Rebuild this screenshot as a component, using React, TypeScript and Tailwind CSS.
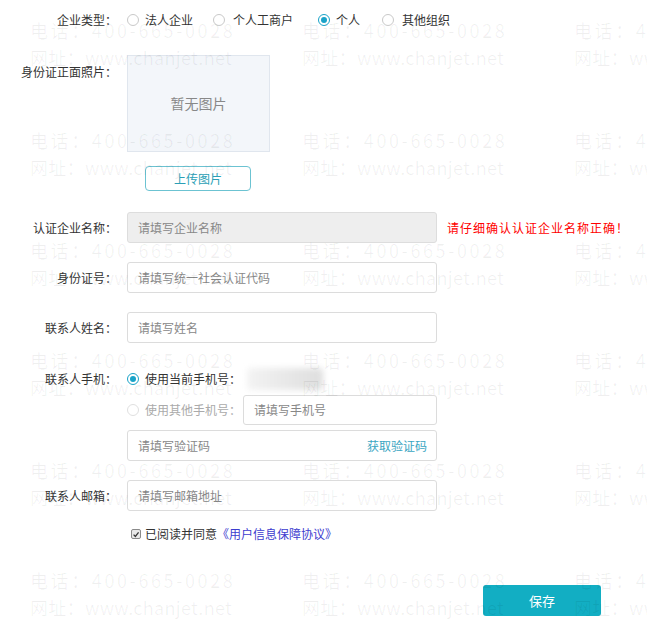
import React from "react";

const WM_ROWS = [0, 1, 2, 3, 4, 5];
const WM_COLS = [0, 1, 2];

function Radio({ checked = false, faint = false }: { checked?: boolean; faint?: boolean }) {
  if (checked) {
    return (
      <span className="flex h-[12px] w-[12px] shrink-0 items-center justify-center rounded-full border border-[#1aa3c8] bg-white">
        <span className="h-[6px] w-[6px] rounded-full bg-[#1aa3c8]" />
      </span>
    );
  }
  return (
    <span
      className={`h-[12px] w-[12px] shrink-0 rounded-full border bg-white ${faint ? "border-[#e0e0e0]" : "border-[#c9c9c9]"}`}
    />
  );
}

function Label({ children }: { children: React.ReactNode }) {
  return <div className="w-[117px] shrink-0 text-right leading-[18px] text-[#333]">{children}</div>;
}

function TextInput({ placeholder, disabled = false }: { placeholder: string; disabled?: boolean }) {
  return (
    <div
      className={`flex h-[31px] w-[310px] items-center rounded-[3px] border px-[10px] text-[#888] ${
        disabled ? "border-[#dddddd] bg-[#eeeeee]" : "border-[#dcdcdc] bg-white"
      }`}
    >
      {placeholder}
    </div>
  );
}

// repeated phone / site watermark laid over the whole form
function Watermark() {
  return (
    <div className="pointer-events-none absolute inset-0 overflow-hidden pt-[17px]">
      {WM_ROWS.map((r) => (
        <div key={r} className="flex h-[110px] pl-[30px]">
          {WM_COLS.map((c) => (
            <div key={c} className="w-[272px] shrink-0 whitespace-nowrap text-[18px] leading-[27px] text-black/[0.06]">
              <div className="tracking-[2.6px]">电话：400-665-0028</div>
              <div className="tracking-[0.3px]">网址：www.chanjet.net</div>
            </div>
          ))}
        </div>
      ))}
    </div>
  );
}

export default function App() {
  return (
    <div className="relative h-[639px] w-[647px] overflow-hidden bg-white font-['Noto_Sans_CJK_SC','Microsoft_YaHei',sans-serif] text-[12px] text-[#333]">
      <div className="pt-[11px]">
        {/* 企业类型 */}
        <div className="flex h-[18px] items-center">
          <Label>企业类型：</Label>
          <div className="ml-[10px] flex items-center">
            <Radio />
            <span className="ml-[6px]">法人企业</span>
            <span className="ml-[20px]" />
            <Radio />
            <span className="ml-[8px]">个人工商户</span>
            <span className="ml-[25px]" />
            <Radio checked />
            <span className="ml-[6px]">个人</span>
            <span className="ml-[22px]" />
            <Radio />
            <span className="ml-[8px]">其他组织</span>
          </div>
        </div>

        {/* 身份证正面照片 */}
        <div className="mt-[26px] flex items-start">
          <div className="pt-[8px]">
            <Label>身份证正面照片：</Label>
          </div>
          <div className="ml-[10px]">
            <div className="flex h-[97px] w-[143px] items-center justify-center border border-[#e0e6ee] bg-[#f3f6fa] text-[14px] text-[#888]">
              暂无图片
            </div>
            <button className="ml-[18px] mt-[14px] flex h-[25px] w-[106px] items-center justify-center rounded-[4px] border border-[#6cc3d2] bg-white text-[12px] text-[#2c9fb6]">
              上传图片
            </button>
          </div>
        </div>

        {/* 认证企业名称 */}
        <div className="mt-[21px] flex items-center">
          <Label>认证企业名称：</Label>
          <div className="ml-[10px]">
            <TextInput placeholder="请填写企业名称" disabled />
          </div>
          <span className="ml-[10px] tracking-[1px] text-[#ff0000]">请仔细确认认证企业名称正确！</span>
        </div>

        <div className="mt-[19px] flex items-center">
          <Label>身份证号：</Label>
          <div className="ml-[10px]">
            <TextInput placeholder="请填写统一社会认证代码" />
          </div>
        </div>

        <div className="mt-[19px] flex items-center">
          <Label>联系人姓名：</Label>
          <div className="ml-[10px]">
            <TextInput placeholder="请填写姓名" />
          </div>
        </div>

        {/* 联系人手机 */}
        <div className="mt-[23px] flex h-[26px] items-center">
          <Label>联系人手机：</Label>
          <div className="ml-[10px] flex items-center">
            <Radio checked />
            <span className="ml-[6px]">使用当前手机号：</span>
            <span className="ml-[6px] h-[22px] w-[76px] rounded-[4px] bg-gradient-to-r from-[#f3f3f3] to-[#dedede] blur-[3px]" />
          </div>
        </div>
        <div className="mt-[3px] flex h-[30px] items-center pl-[127px]">
          <Radio faint />
          <span className="ml-[6px] text-[#aaaaaa]">使用其他手机号：</span>
          <div className="ml-[2px] flex h-[30px] w-[194px] items-center rounded-[3px] border border-[#dcdcdc] bg-white px-[10px] text-[#888]">
            请填写手机号
          </div>
        </div>
        <div className="mt-[5px] pl-[127px]">
          <div className="flex h-[31px] w-[310px] items-center justify-between rounded-[3px] border border-[#dcdcdc] bg-white pl-[10px] pr-[9px] text-[#888]">
            <span>请填写验证码</span>
            <span className="text-[#3ba6c2]">获取验证码</span>
          </div>
        </div>

        <div className="mt-[19px] flex items-center">
          <Label>联系人邮箱：</Label>
          <div className="ml-[10px]">
            <TextInput placeholder="请填写邮箱地址" />
          </div>
        </div>

        {/* 协议 */}
        <div className="mt-[14px] flex h-[18px] items-center pl-[131px]">
          <span className="flex h-[10px] w-[10px] items-center justify-center rounded-[2px] border border-[#8a8a8a] bg-[#e8e8e8]">
            <svg viewBox="0 0 10 10" className="h-[9px] w-[9px]">
              <path d="M2 5.2 L4.2 7.4 L8.2 2.4" fill="none" stroke="#333" strokeWidth="1.6" />
            </svg>
          </span>
          <span className="ml-[4px]">已阅读并同意</span>
          <span className="text-[#3c3ccf]">《用户信息保障协议》</span>
        </div>

        <div className="mt-[42px] pl-[483px]">
          <button className="flex h-[31px] w-[118px] items-center justify-center rounded-[3px] bg-[#12aec3] text-[13px] text-white">
            保存
          </button>
        </div>
      </div>
      <Watermark />
    </div>
  );
}
